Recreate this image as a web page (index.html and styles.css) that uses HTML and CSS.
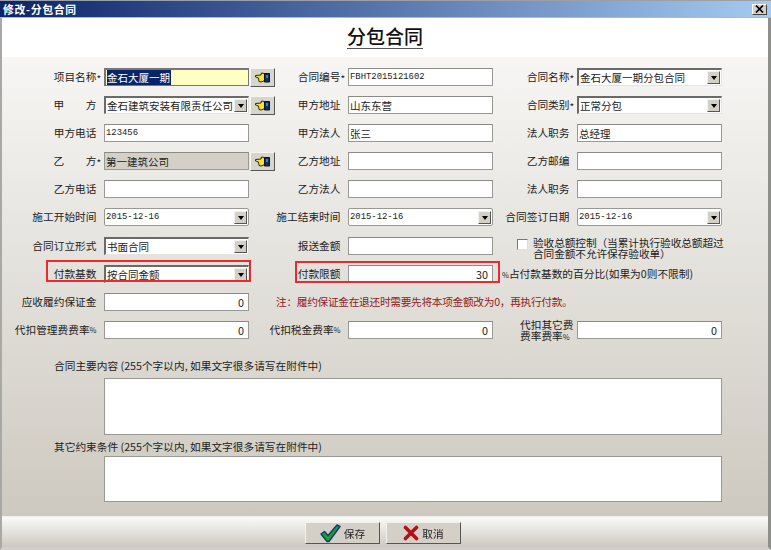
FILE: index.html
```html
<!DOCTYPE html>
<html lang="zh">
<head>
<meta charset="utf-8">
<title>修改-分包合同</title>
<link rel="stylesheet" href="styles.css">
</head>
<body>
<svg class="defs" width="0" height="0" aria-hidden="true">
  <symbol id="hand" viewBox="0 0 15 11">
    <path d="M0.5 3.5 L6 3 L6.5 1 L9.5 1.5 L10 8.5 L6 10 L4 9.5 L3.5 6 L0.5 5 Z" fill="#f4e23a" stroke="#2a2a10" stroke-width="1"/>
    <path d="M9.5 1.5 H14.5 V10 H9.5 Z" fill="#0d2f5e" stroke="#101010" stroke-width="1"/>
    <path d="M11 3 H13 V6 H11 Z" fill="#2f8f9f"/>
  </symbol>
</svg>
<div class="window">
  <div class="titlebar">
    <span class="title-text">修改-分包合同</span>
    <span class="close"><svg width="9" height="8" viewBox="0 0 9 8"><path d="M1 0.5 L8 7.5 M8 0.5 L1 7.5" stroke="#000" stroke-width="1.7"/></svg></span>
  </div>
  <div class="frame">
    <div class="head"><h1 class="heading">分包合同</h1></div>
    <div class="body">
      <div class="grid">
        <div class="lbl">项目名称<i class="star">*</i></div>
        <div class="field yellow"><span class="selected">金石大厦一期</span></div>
        <div class="slot"><span class="pick"><svg width="15" height="11"><use href="#hand"/></svg></span></div>
        <div class="lbl">合同编号<i class="star">*</i></div>
        <div class="field"><span class="mono">FBHT2015121602</span></div>
        <div class="lbl">合同名称<i class="star">*</i></div>
        <div class="field combo"><span class="val">金石大厦一期分包合同</span><span class="arrow"></span></div>

        <div class="lbl"><span class="spread"><span>甲</span><span>方</span></span></div>
        <div class="field combo"><span class="val">金石建筑安装有限责任公司</span><span class="arrow"></span></div>
        <div class="slot"><span class="pick"><svg width="15" height="11"><use href="#hand"/></svg></span></div>
        <div class="lbl">甲方地址</div>
        <div class="field">山东东营</div>
        <div class="lbl">合同类别<i class="star">*</i></div>
        <div class="field combo"><span class="val">正常分包</span><span class="arrow"></span></div>

        <div class="lbl">甲方电话</div>
        <div class="field"><span class="mono">123456</span></div>
        <div class="slot"></div>
        <div class="lbl">甲方法人</div>
        <div class="field">张三</div>
        <div class="lbl">法人职务</div>
        <div class="field">总经理</div>

        <div class="lbl"><span class="spread"><span>乙</span><span>方</span></span><i class="star">*</i></div>
        <div class="field readonly">第一建筑公司</div>
        <div class="slot"><span class="pick"><svg width="15" height="11"><use href="#hand"/></svg></span></div>
        <div class="lbl">乙方地址</div>
        <div class="field"></div>
        <div class="lbl">乙方邮编</div>
        <div class="field"></div>

        <div class="lbl">乙方电话</div>
        <div class="field"></div>
        <div class="slot"></div>
        <div class="lbl">乙方法人</div>
        <div class="field"></div>
        <div class="lbl">法人职务</div>
        <div class="field"></div>

        <div class="lbl">施工开始时间</div>
        <div class="field combo light"><span class="val mono">2015-12-16</span><span class="arrow"></span></div>
        <div class="slot"></div>
        <div class="lbl">施工结束时间</div>
        <div class="field combo light"><span class="val mono">2015-12-16</span><span class="arrow"></span></div>
        <div class="lbl">合同签订日期</div>
        <div class="field combo light"><span class="val mono">2015-12-16</span><span class="arrow"></span></div>

        <div class="lbl">合同订立形式</div>
        <div class="field combo"><span class="val">书面合同</span><span class="arrow"></span></div>
        <div class="slot"></div>
        <div class="lbl">报送金额</div>
        <div class="field"></div>
        <div class="check-cell">
          <span class="checkbox"></span>
          <span class="check-text">验收总额控制（当累计执行验收总额超过<br>合同金额不允许保存验收单）</span>
        </div>

        <div class="lbl">付款基数</div>
        <div class="field combo"><span class="val">按合同金额</span><span class="arrow"></span></div>
        <div class="slot"></div>
        <div class="lbl">付款限额</div>
        <div class="field num">30</div>
        <div class="hint"><span class="pct">%</span>占付款基数的百分比(如果为0则不限制)</div>

        <div class="lbl">应收履约保证金</div>
        <div class="field num">0</div>
        <div class="slot"></div>
        <div class="note">注：履约保证金在退还时需要先将本项金额改为0，再执行付款。</div>

        <div class="lbl">代扣管理费费率<span class="pct">%</span></div>
        <div class="field num">0</div>
        <div class="slot"></div>
        <div class="lbl">代扣税金费率<span class="pct">%</span></div>
        <div class="field num">0</div>
        <div class="lbl two-line">代扣其它费<br>费率费率<span class="pct">%</span></div>
        <div class="field num">0</div>
      </div>

      <div class="memo first">
        <div class="memo-label">合同主要内容 (255个字以内, 如果文字很多请写在附件中)</div>
        <div class="memo-box tall"></div>
      </div>
      <div class="memo">
        <div class="memo-label">其它约束条件 (255个字以内, 如果文字很多请写在附件中)</div>
        <div class="memo-box short"></div>
      </div>

      <div class="mark mark-left"></div>
      <div class="mark mark-right"></div>
    </div>
    <div class="footer">
      <button class="btn" type="button">
        <svg width="21" height="19" viewBox="0 0 21 19"><path d="M1 10 L4.5 7.5 L8 11.5 L17 1 L20 2.5 L9 17.5 L7 17.5 Z" fill="#1f9e2c" stroke="#123a7a" stroke-width="1.4" stroke-linejoin="round"/></svg>
        <span>保存</span>
      </button>
      <button class="btn" type="button">
        <svg width="16" height="16" viewBox="0 0 16 16"><path d="M2.5 2.5 L13.5 13.5 M13.5 2.5 L2.5 13.5" stroke="#b01218" stroke-width="3.6" stroke-linecap="round"/></svg>
        <span>取消</span>
      </button>
    </div>
  </div>
</div>
</body>
</html>
```
FILE: styles.css
```css
* { box-sizing: border-box; }
html, body { margin: 0; padding: 0; }
body {
  width: 771px;
  height: 550px;
  overflow: hidden;
  background: #e8e6e1;
  font-family: "Noto Sans CJK SC", "Liberation Sans", sans-serif;
  font-size: 10.7px;
  color: #222;
}
.defs { position: absolute; }
.window {
  width: 771px;
  height: 550px;
  display: flex;
  flex-direction: column;
  filter: blur(0.3px);
}
.titlebar {
  height: 18px;
  flex: none;
  display: flex;
  align-items: center;
  justify-content: space-between;
  padding: 0 4px 0 3px;
  border-top: 1px solid #9aa0a8;
  border-bottom: 1px solid #b8b8b0;
  background: linear-gradient(90deg, #0a246a 0%, #a6caf0 100%);
}
.title-text { color: #fff; font-weight: 700; font-size: 10.8px; letter-spacing: 0.7px; }
.close {
  width: 15px;
  height: 11px;
  display: flex;
  align-items: center;
  justify-content: center;
  background: #d4d0c8;
  border: 1px solid;
  border-color: #fff #444 #444 #fff;
}
.frame {
  flex: 1;
  min-height: 0;
  display: flex;
  flex-direction: column;
  border-left: 2px solid #a8a8a4;
  border-right: 3px solid #8e8e8a;
  border-bottom: 3px solid #cfcfcb;
}
.head {
  height: 39px;
  flex: none;
  background: #fff;
  display: flex;
  justify-content: center;
  padding-top: 6px;
}
.heading {
  margin: 0;
  font-size: 19px;
  font-weight: 500;
  line-height: 24px;
  height: 25px;
  color: #111;
  border-bottom: 1px solid #555;
}
.body {
  position: relative;
  flex: 1;
  min-height: 0;
  padding-top: 11px;
  background: linear-gradient(180deg, #f7f6f4 0%, #cdc9c0 100%);
}
.grid {
  display: grid;
  grid-template-columns: 102px 145px 26px 73px 145px 84px 145px;
  grid-auto-rows: 18px;
  row-gap: 10.1px;
}
.lbl {
  display: flex;
  align-items: center;
  justify-content: flex-end;
  padding-right: 7.5px;
  line-height: 18px;
  white-space: nowrap;
}
.star { font-style: normal; width: 5px; margin-right: -5px; margin-top: 4px; font-size: 10px; }
.pct { font-size: 7.5px; }
.spread { display: inline-flex; justify-content: space-between; width: 43px; }
.field {
  display: flex;
  align-items: center;
  height: 18px;
  padding: 0 3px 0 1px;
  font-size: 10.5px;
  background: #fff;
  border: 1px solid #989894;
  border-top-color: #8a8a86;
  white-space: nowrap;
  overflow: hidden;
}
.mono { font-family: "Liberation Mono", monospace; font-size: 8.9px; }
.yellow { background: #ffffc4; border-width: 2px 1px 1px 2px; border-color: #777; padding-left: 1px; }
.selected { background: #0a246a; color: #fff; padding-right: 1px; }
.readonly { background: #d4d0c8; }
.num { justify-content: flex-end; padding-right: 4px; font-size: 10.8px; }
.combo {
  padding: 0 1px 0 1px;
  border-width: 2px 1px 1px 2px;
  border-color: #6a6a66 #e6e4df #e6e4df #6a6a66;
  justify-content: space-between;
}
.combo.light {
  border-width: 1px;
  border-color: #989894;
  border-radius: 2px;
  padding-left: 1px;
}
.val { flex: none; }
.arrow {
  flex: none;
  width: 13px;
  height: 13px;
  position: relative;
  background: #d4d0c8;
  border: 1px solid;
  border-color: #f4f2ee #555 #555 #f4f2ee;
}
.arrow::after {
  content: "";
  position: absolute;
  left: 2.5px;
  top: 4px;
  border-style: solid;
  border-width: 4px 3.5px 0;
  border-color: #000 transparent transparent;
}
.slot { display: flex; align-items: center; padding-left: 1px; }
.pick {
  width: 25px;
  height: 19px;
  flex: none;
  display: flex;
  align-items: center;
  justify-content: center;
  background: #d8d5cd;
  border: 1px solid;
  border-color: #f6f5f2 #555 #555 #f6f5f2;
}
.check-cell {
  grid-column: span 2;
  display: flex;
  align-items: flex-start;
  padding-left: 24px;
}
.checkbox {
  flex: none;
  width: 11px;
  height: 11px;
  margin-top: 2px;
  background: #fff;
  border: 1px solid;
  border-color: #777 #ddd #ddd #777;
}
.check-text { margin-left: 5px; line-height: 11px; white-space: nowrap; letter-spacing: -0.1px; }
.hint { grid-column: span 2; padding-left: 9px; line-height: 18px; white-space: nowrap; }
.note { grid-column: span 4; padding-left: 1px; color: #8e1c1c; line-height: 18px; white-space: nowrap; letter-spacing: -0.3px; }
.lbl.two-line {
  display: block;
  text-align: left;
  padding: 0 0 0 27px;
  line-height: 11px;
  margin-top: -2px;
  height: 22px;
}
.memo { padding-left: 52px; }
.memo.first { margin-top: 20px; }
.memo-label { line-height: 14px; white-space: nowrap; }
.memo-box {
  margin-left: 50px;
  width: 618px;
  background: #fff;
  border: 1px solid #989894;
}
.tall { margin-top: 5px; height: 57px; margin-bottom: 5px; }
.short { margin-top: 2px; height: 46px; }
.mark { position: absolute; border: 2px solid #f0282c; height: 22px; width: 205px; }
.mark-left { left: 44px; top: 203px; }
.mark-right { left: 293px; top: 204px; }
.footer {
  height: 31px;
  flex: none;
  display: flex;
  justify-content: center;
  align-items: flex-end;
  gap: 6px;
  padding: 0 4px 3px 0;
  border-top: 1px solid #f0eee9;
  background: linear-gradient(180deg, #fbfaf8 0%, #cdc9c0 100%);
}
.btn {
  width: 75px;
  height: 22px;
  padding: 0;
  display: flex;
  align-items: center;
  justify-content: center;
  gap: 3px;
  font: inherit;
  color: #222;
  background: #d4d0c8;
  border: 1px solid;
  border-color: #f4f2ee #555 #555 #f4f2ee;
}
```
